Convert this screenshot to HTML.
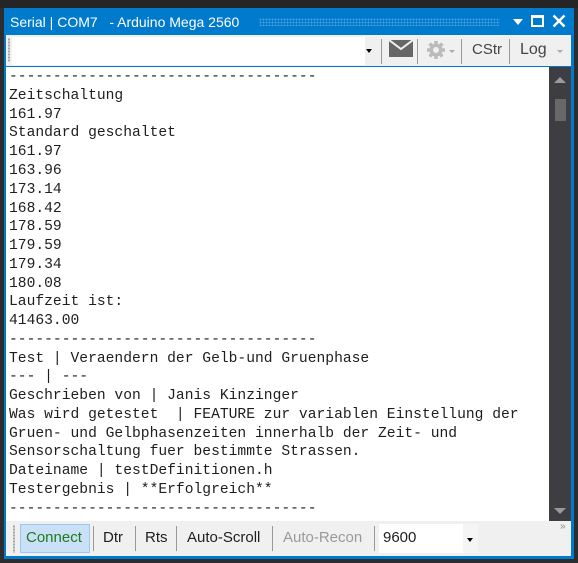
<!DOCTYPE html>
<html><head><meta charset="utf-8">
<style>
*{margin:0;padding:0;box-sizing:border-box}
body{width:578px;height:563px;background:#2d2d30;position:relative;overflow:hidden;font-family:"Liberation Sans",sans-serif}
.topbar{position:absolute;left:0;top:0;width:578px;height:8px;background:#252526}
.win{position:absolute;left:4px;top:8px;width:570px;height:551px;background:#007acc}
.title{position:absolute;left:10px;top:9px;height:26px;color:#fff;font-size:14px;line-height:26px;white-space:nowrap}
.dots{position:absolute;left:259px;top:18px;width:241px;height:8px;background-image:radial-gradient(#4aa0dc 0.8px,transparent 1px);background-size:3px 3px}
.tb{position:absolute;left:6px;top:35px;width:565px;height:31px;background:#f0f0f0}
.combo{position:absolute;left:12px;top:37px;width:353px;height:28px;background:#fff}
.area{position:absolute;left:6px;top:67px;width:543px;height:454px;background:#fff;overflow:hidden}
.sb{position:absolute;left:549px;top:67px;width:22px;height:454px;background:#3e3e42}
.thumb{position:absolute;left:555px;top:99px;width:11px;height:22px;background:#686868}
.txt{position:absolute;left:9px;font-family:"Liberation Mono",monospace;font-size:14.65px;color:#1e1e1e;white-space:pre;line-height:19px}
.bt{position:absolute;left:6px;top:521px;width:565px;height:35px;background:#f0f0f0}
.btn{position:absolute;top:526px;height:24px;font-size:15px;line-height:24px;color:#1e1e1e;white-space:nowrap;transform-origin:0 0}
.sep{position:absolute;width:1px;background:#999}
.grip{position:absolute;width:2px;background-image:radial-gradient(#999 0.7px,transparent 1px);background-size:2px 3px}
</style></head><body>
<div class="topbar"></div>
<div class="win"></div>
<div class="title">Serial | COM7 &nbsp; - Arduino Mega 2560</div>
<div class="dots"></div>
<div style="position:absolute;left:513px;top:19px;width:0;height:0;border-left:5px solid transparent;border-right:5px solid transparent;border-top:6px solid #fff"></div>
<div style="position:absolute;left:531px;top:15px;width:13px;height:12px;border:2px solid #fff;border-top-width:3px"></div>
<svg style="position:absolute;left:552px;top:14px" width="14" height="14"><path d="M1.5 1.5L12.5 12.5M12.5 1.5L1.5 12.5" stroke="#fff" stroke-width="2.4"/></svg>
<div class="tb"></div>
<div class="grip" style="left:8px;top:38px;height:24px"></div>
<div class="combo"></div>
<div style="position:absolute;left:365px;top:37px;width:12px;height:28px;background:#f0f0f0"></div>
<div style="position:absolute;left:366px;top:49px;border-left:3px solid transparent;border-right:3px solid transparent;border-top:4px solid #000"></div>
<div class="sep" style="left:381px;top:39px;height:25px"></div>
<div style="position:absolute;left:389px;top:40px;width:24px;height:17px;background:#666"></div>
<svg style="position:absolute;left:389px;top:40px" width="24" height="17"><path d="M0 0L12 9L24 0" stroke="#f0f0f0" stroke-width="2" fill="none"/></svg>
<div class="sep" style="left:417px;top:39px;height:25px"></div>
<svg style="position:absolute;left:426px;top:40px" width="20" height="20"><circle cx="10" cy="10" r="6.5" fill="#bbb"/><g stroke="#bbb" stroke-width="3.5"><path d="M10 1V19M1 10H19M3.6 3.6L16.4 16.4M16.4 3.6L3.6 16.4"/></g><circle cx="10" cy="10" r="3" fill="#f0f0f0"/></svg>
<div style="position:absolute;left:449px;top:50px;border-left:3px solid transparent;border-right:3px solid transparent;border-top:3px solid #aaa"></div>
<div class="sep" style="left:461px;top:39px;height:25px"></div>
<div class="btn" style="left:472px;top:38px;color:#444">CStr</div>
<div class="sep" style="left:509px;top:39px;height:25px"></div>
<div class="btn" style="left:520px;top:38px;color:#444;font-size:16px">Log</div>
<div style="position:absolute;left:557px;top:50px;border-left:3px solid transparent;border-right:3px solid transparent;border-top:3px solid #aaa"></div>
<div class="area"></div>
<div class="sb"></div>
<div style="position:absolute;left:554px;top:77px;border-left:6px solid transparent;border-right:6px solid transparent;border-bottom:6px solid #999"></div>
<div class="thumb"></div>
<div style="position:absolute;left:554px;top:508px;border-left:6px solid transparent;border-right:6px solid transparent;border-top:6px solid #999"></div>
<div class="txt" style="top:68px">-----------------------------------</div>
<div class="txt" style="top:87px">Zeitschaltung</div>
<div class="txt" style="top:106px">161.97</div>
<div class="txt" style="top:124px">Standard geschaltet</div>
<div class="txt" style="top:143px">161.97</div>
<div class="txt" style="top:162px">163.96</div>
<div class="txt" style="top:181px">173.14</div>
<div class="txt" style="top:200px">168.42</div>
<div class="txt" style="top:218px">178.59</div>
<div class="txt" style="top:237px">179.59</div>
<div class="txt" style="top:256px">179.34</div>
<div class="txt" style="top:275px">180.08</div>
<div class="txt" style="top:293px">Laufzeit ist:</div>
<div class="txt" style="top:312px">41463.00</div>
<div class="txt" style="top:331px">-----------------------------------</div>
<div class="txt" style="top:350px">Test | Veraendern der Gelb-und Gruenphase</div>
<div class="txt" style="top:368px">--- | ---</div>
<div class="txt" style="top:387px">Geschrieben von | Janis Kinzinger</div>
<div class="txt" style="top:406px">Was wird getestet  | FEATURE zur variablen Einstellung der</div>
<div class="txt" style="top:425px">Gruen- und Gelbphasenzeiten innerhalb der Zeit- und</div>
<div class="txt" style="top:443px">Sensorschaltung fuer bestimmte Strassen.</div>
<div class="txt" style="top:462px">Dateiname | testDefinitionen.h</div>
<div class="txt" style="top:481px">Testergebnis | **Erfolgreich**</div>
<div class="txt" style="top:500px">-----------------------------------</div>
<div class="bt"></div>
<div class="grip" style="left:13px;top:525px;height:28px"></div>
<div style="position:absolute;left:20px;top:524px;width:70px;height:29px;background:#c9e0f7;border:1px solid #99c9ef"></div>
<div class="btn" style="left:26px;color:#1e7b1e">Connect</div>
<div class="sep" style="left:93px;top:526px;height:25px"></div>
<div class="btn" style="left:103px">Dtr</div>
<div class="sep" style="left:135px;top:526px;height:25px"></div>
<div class="btn" style="left:145px">Rts</div>
<div class="sep" style="left:176px;top:526px;height:25px"></div>
<div class="btn" style="left:187px">Auto-Scroll</div>
<div class="sep" style="left:272px;top:526px;height:25px"></div>
<div class="btn" style="left:283px;color:#999">Auto-Recon</div>
<div class="sep" style="left:374px;top:526px;height:25px"></div>
<div style="position:absolute;left:379px;top:524px;width:99px;height:29px;background:#fff"></div>
<div class="btn" style="left:383px">9600</div>
<div style="position:absolute;left:463px;top:524px;width:15px;height:29px;background:#f5f5f5"></div>
<div style="position:absolute;left:467px;top:538px;border-left:3px solid transparent;border-right:3px solid transparent;border-top:4px solid #000"></div>
<div style="position:absolute;left:560px;top:521px;font-size:10px;color:#888">»</div>
</body></html>
